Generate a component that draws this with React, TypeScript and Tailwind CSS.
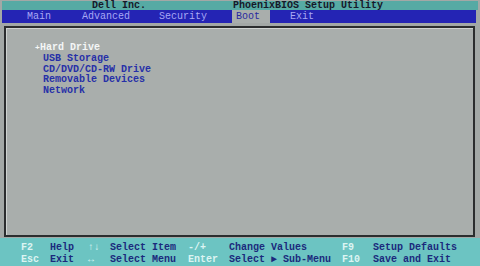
const mono = { fontFamily: '"Liberation Mono", "DejaVu Sans Mono", monospace' };

const tabs = [
  { label: "Main", left: 25 },
  { label: "Advanced", left: 80 },
  { label: "Security", left: 157 },
  { label: "Boot", left: 236, active: true },
  { label: "Exit", left: 288 },
];

const bootOrder = ["Hard Drive", "USB Storage", "CD/DVD/CD-RW Drive", "Removable Devices", "Network"];

function Key({ w, children }: { w: string; children: React.ReactNode }) {
  return <span className={`${w} shrink-0 text-[#dcf4f2]`}>{children}</span>;
}

function Desc({ w, children }: { w: string; children: React.ReactNode }) {
  return <span className={`${w} shrink-0 text-[#1b2a7c]`}>{children}</span>;
}

export default function App() {
  return (
    <div
      className="flex h-[266px] w-[480px] flex-col overflow-hidden bg-[#a3a8a6] text-[10px] font-bold leading-none"
      style={mono}
    >
      <div className="mx-[2px] mt-[1px] flex h-[9px] shrink-0 items-center bg-[#56aaa4] text-[#16182a]">
        <span className="ml-[90px] w-[141px]">Dell Inc.</span>
        <span>PhoenixBIOS Setup Utility</span>
      </div>

      <div className="relative mx-[2px] h-[13px] w-[474px] shrink-0 bg-[#2424b4] font-normal text-[#a8a8f4]">
        {tabs.map((t) =>
          t.active ? (
            <span
              key={t.label}
              className="absolute top-0 flex h-[13px] w-[38px] items-center bg-[#a9aeac] pl-[4px] text-[#2a2aa0]"
              style={{ left: t.left - 6 }}
            >
              {t.label}
            </span>
          ) : (
            <span key={t.label} className="absolute top-[2px]" style={{ left: t.left }}>
              {t.label}
            </span>
          )
        )}
      </div>

      <div className="ml-[4px] mr-[5px] mt-[3px] flex-1 border-2 border-[#2b2d2e] bg-[#a9aeac] shadow-[inset_1px_1px_0_#cfd3d1]">
        <div className="pl-[29px] pt-[15px] leading-[10.75px]">
          {bootOrder.map((item, i) => (
            <div key={item} className="flex items-center">
              {i === 0 ? (
                <span className="w-[5px] text-[8px] leading-none text-[#f4f6f6]">+</span>
              ) : (
                <span className="w-[8px]" />
              )}
              <span className={i === 0 ? "text-[#f4f6f6]" : "text-[#2630a8]"}>{item}</span>
            </div>
          ))}
        </div>
      </div>

      <div className="mt-[1px] flex h-[28px] shrink-0 flex-col justify-center gap-[2px] bg-[#6cc4c2] pl-[21px] pt-[3px]">
        <div className="flex">
          <Key w="w-[29px]">F2</Key>
          <Desc w="w-[38px]">Help</Desc>
          <Key w="w-[22px]">↑↓</Key>
          <Desc w="w-[78px]">Select Item</Desc>
          <Key w="w-[41px]">-/+</Key>
          <Desc w="w-[113px]">Change Values</Desc>
          <Key w="w-[31px]">F9</Key>
          <Desc w="w-auto">Setup Defaults</Desc>
        </div>
        <div className="flex">
          <Key w="w-[29px]">Esc</Key>
          <Desc w="w-[38px]">Exit</Desc>
          <Key w="w-[22px]">↔</Key>
          <Desc w="w-[78px]">Select Menu</Desc>
          <Key w="w-[41px]">Enter</Key>
          <Desc w="w-[113px]">Select ► Sub-Menu</Desc>
          <Key w="w-[31px]">F10</Key>
          <Desc w="w-auto">Save and Exit</Desc>
        </div>
      </div>
    </div>
  );
}
